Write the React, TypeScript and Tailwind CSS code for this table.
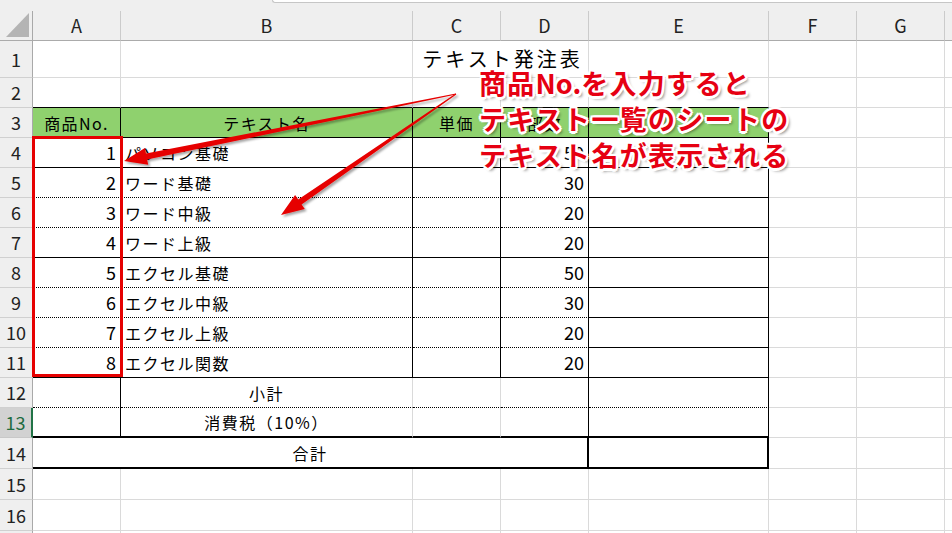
import React from 'react';

const R_GRID = 'border-r border-r-[#dadada]';
const R_BLACK = 'border-r border-r-black';
const R_THICK = 'border-r-2 border-r-black';
const B_GRID = 'border-b border-b-[#dadada]';
const B_BLACK = 'border-b border-b-black';
const B_DOT = 'border-b border-b-black [border-bottom-style:dotted]';
const B_THICK = 'border-b-2 border-b-black';

const items = [
  { n: 1, name: 'パソコン基礎', q: 50 },
  { n: 2, name: 'ワード基礎', q: 30 },
  { n: 3, name: 'ワード中級', q: 20 },
  { n: 4, name: 'ワード上級', q: 20 },
  { n: 5, name: 'エクセル基礎', q: 50 },
  { n: 6, name: 'エクセル中級', q: 30 },
  { n: 7, name: 'エクセル上級', q: 20 },
  { n: 8, name: 'エクセル関数', q: 20 },
];

function rightB(r: number, c: number): string {
  if (r >= 3 && r <= 11) return c <= 4 ? R_BLACK : R_GRID;
  if (r === 12 || r === 13) {
    if (c === 0 || c === 3 || c === 4) return R_BLACK;
    return R_GRID;
  }
  if (r === 14) {
    if (c === 3 || c === 4) return R_THICK;
    return R_GRID;
  }
  return R_GRID;
}

function bottomB(r: number, c: number): string {
  if (r === 2 || r === 3) return c <= 4 ? B_BLACK : B_GRID;
  if (r >= 4 && r <= 11) {
    if (c === 4) return B_BLACK;
    if (c <= 3) return r === 4 || r === 7 || r === 11 ? B_BLACK : B_DOT;
    return B_GRID;
  }
  if (r === 12) return c <= 4 ? B_DOT : B_GRID;
  if (r === 13 || r === 14) return c <= 4 ? B_THICK : B_GRID;
  return B_GRID;
}

function RowHeader({ n }: { n: number }) {
  const sel = n === 13;
  return (
    <div
      className={
        sel
          ? 'flex items-center justify-center bg-[#d2d2d2] text-[#1d6b3f] border-r-2 border-r-[#217346] border-b border-b-[#c8c8c8] text-[18px]'
          : 'flex items-center justify-center bg-[#efefef] text-[#222] border-r border-r-[#a9a9a9] border-b border-b-[#d0d0d0] text-[18px]'
      }
    >
      {n}
    </div>
  );
}

function C({
  r,
  c,
  span,
  children,
  align,
  extra,
}: {
  r: number;
  c: number;
  span?: string;
  children?: React.ReactNode;
  align?: 'l' | 'c' | 'r';
  extra?: string;
}) {
  const lastC = span === 'col-span-4' ? 3 : span === 'col-span-2' ? c + 1 : c;
  const green = r === 3 && c <= 4 ? 'bg-[#8fd16e]' : '';
  const al =
    align === 'r' ? 'justify-end pr-[4px]' : align === 'c' ? 'justify-center' : 'justify-start pl-[4px]';
  return (
    <div
      className={`flex items-center whitespace-nowrap text-black ${al} ${rightB(r, lastC)} ${bottomB(
        r,
        c
      )} ${green} ${span ?? ''} ${extra ?? ''}`}
    >
      {children}
    </div>
  );
}

function arrowPts(sx: number, sy: number, tx: number, ty: number, w0: number, w1: number, hl: number, hw: number) {
  const dx = tx - sx;
  const dy = ty - sy;
  const L = Math.hypot(dx, dy);
  const ux = dx / L;
  const uy = dy / L;
  const nx = -uy;
  const ny = ux;
  const bx = tx - ux * hl;
  const by = ty - uy * hl;
  const p = [
    [sx + (nx * w0) / 2, sy + (ny * w0) / 2],
    [bx + (nx * w1) / 2, by + (ny * w1) / 2],
    [bx + (nx * hw) / 2, by + (ny * hw) / 2],
    [tx, ty],
    [bx - (nx * hw) / 2, by - (ny * hw) / 2],
    [bx - (nx * w1) / 2, by - (ny * w1) / 2],
    [sx - (nx * w0) / 2, sy - (ny * w0) / 2],
  ];
  return p.map((q) => `${q[0].toFixed(1)},${q[1].toFixed(1)}`).join(' ');
}

export default function App() {
  const cols = ['A', 'B', 'C', 'D', 'E', 'F', 'G'];
  const rows: React.ReactNode[] = [];

  for (let r = 1; r <= 16; r++) {
    const cells: React.ReactNode[] = [<RowHeader key={`h${r}`} n={r} />];
    if (r === 1) {
      cells.push(<C key="a" r={r} c={0} />);
      cells.push(<C key="b" r={r} c={1} />);
      cells.push(
        <C key="cd" r={r} c={2} span="col-span-2" align="c" extra="text-[20px] tracking-[3px] pl-[4px]">
          テキスト発注表
        </C>
      );
      for (let c = 4; c < 7; c++) cells.push(<C key={c} r={r} c={c} />);
    } else if (r === 3) {
      const hd = ['商品No.', 'テキスト名', '単価', '部数', ''];
      hd.forEach((t, c) =>
        cells.push(
          <C key={c} r={r} c={c} align="c" extra="text-[16px] tracking-[1.4px]">
            {t}
          </C>
        )
      );
      for (let c = 5; c < 7; c++) cells.push(<C key={c} r={r} c={c} />);
    } else if (r >= 4 && r <= 11) {
      const it = items[r - 4];
      cells.push(
        <C key="a" r={r} c={0} align="r" extra="text-[18px]">
          {it.n}
        </C>
      );
      cells.push(
        <C key="b" r={r} c={1} align="l" extra="text-[16px] tracking-[1.5px]">
          {it.name}
        </C>
      );
      cells.push(<C key="c" r={r} c={2} />);
      cells.push(
        <C key="d" r={r} c={3} align="r" extra="text-[18px]">
          {it.q}
        </C>
      );
      for (let c = 4; c < 7; c++) cells.push(<C key={c} r={r} c={c} />);
    } else if (r === 12 || r === 13) {
      cells.push(<C key="a" r={r} c={0} />);
      cells.push(
        <C key="b" r={r} c={1} align="c" extra="text-[16px] tracking-[1.5px]">
          {r === 12 ? '小計' : '消費税（10%）'}
        </C>
      );
      for (let c = 2; c < 7; c++) cells.push(<C key={c} r={r} c={c} />);
    } else if (r === 14) {
      cells.push(
        <C key="ad" r={r} c={0} span="col-span-4" align="c" extra="text-[16px] tracking-[1.5px]">
          合計
        </C>
      );
      for (let c = 4; c < 7; c++) cells.push(<C key={c} r={r} c={c} />);
    } else {
      for (let c = 0; c < 7; c++) cells.push(<C key={c} r={r} c={c} />);
    }
    cells.push(<div key="rest" className="border-b border-b-[#dadada]" />);
    rows.push(<React.Fragment key={r}>{cells}</React.Fragment>);
  }

  return (
    <div className="relative w-[952px] h-[533px] overflow-hidden bg-white font-['Noto_Sans_CJK_JP','Noto_Sans',sans-serif]">
      {/* top strip */}
      <div className="flex h-[11px] bg-[#efefef]">
        <div className="w-[272px]" />
        <div className="flex-1 h-[3px] bg-white border-b border-l border-[#c6c6c6] rounded-bl-[4px]" />
      </div>

      <div className="grid grid-cols-[33px_88px_292px_88px_88px_180px_88px_88px_7px] grid-rows-[30px_37px_repeat(12,30px)_repeat(3,31px)_2px]">
        {/* column headers */}
        <div className="relative bg-[#efefef] border-r border-r-[#a9a9a9] border-b border-b-[#ababab]">
          <svg className="absolute left-0 top-0" width="32" height="29" viewBox="0 0 32 29">
            <polygon points="29,2 29,26 6,26" fill="#b4b4b4" />
          </svg>
        </div>
        {cols.map((c) => (
          <div
            key={c}
            className="flex items-center justify-center bg-[#efefef] text-[#222] text-[18px] border-r border-r-[#cbcbcb] border-b border-b-[#ababab]"
          >
            {c}
          </div>
        ))}
        <div className="bg-[#efefef] border-b border-b-[#ababab]" />

        {rows}

        {/* partial last row */}
        <div className="bg-[#efefef] border-r border-r-[#a9a9a9]" />
        {cols.map((c) => (
          <div key={`p${c}`} className="border-r border-r-[#dadada]" />
        ))}
        <div />
      </div>

      {/* red selection box */}
      <div className="absolute left-[32px] top-[136px] w-[91px] h-[241px] border-[3px] border-[#e60000]" />

      {/* arrows */}
      <svg className="absolute left-0 top-0 pointer-events-none" width="952" height="533" viewBox="0 0 952 533">
        <defs>
          <filter id="sh" x="-10%" y="-10%" width="130%" height="140%">
            <feDropShadow dx="2" dy="2" stdDeviation="1.2" floodColor="#000" floodOpacity="0.35" />
          </filter>
        </defs>
        <g filter="url(#sh)" fill="#e60000">
          <polygon points={arrowPts(456, 94, 124, 161, 1, 6, 23, 17)} />
          <polygon points={arrowPts(456, 94, 281, 215, 1, 6, 23, 17)} />
        </g>
      </svg>

      {/* annotation */}
      <div className="absolute left-[479px] top-[65px] text-[27px] leading-[36px] font-bold tracking-[1.3px] text-[#e60012] whitespace-nowrap [text-shadow:2.5px_0_0_#fff,-2.5px_0_0_#fff,0_2.5px_0_#fff,0_-2.5px_0_#fff,1.8px_1.8px_0_#fff,-1.8px_-1.8px_0_#fff,1.8px_-1.8px_0_#fff,-1.8px_1.8px_0_#fff,3px_3px_3px_rgba(0,0,0,0.45)]">
        <div>
          商品<span className="tracking-[0px]">No.</span>を入力すると
        </div>
        <div>テキスト一覧のシートの</div>
        <div>テキスト名が表示される</div>
      </div>
    </div>
  );
}
